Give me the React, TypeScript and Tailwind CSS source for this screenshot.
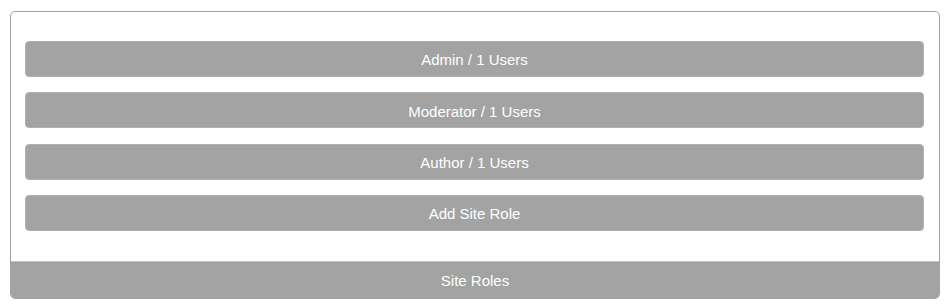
const roles = [
  { name: 'Admin', users: 1 },
  { name: 'Moderator', users: 1 },
  { name: 'Author', users: 1 },
]

export default function App() {
  return (
    <div className="bg-white min-h-[307px] pt-[11px] pl-[10px] pr-[10px] font-['Liberation_Sans',Arial,sans-serif]">
      <div className="w-[930px] border border-[#a3a3a3] rounded-[5px] overflow-hidden">
        <div className="flex flex-col gap-[15.3px] pt-[29px] pb-[30px] pl-[14px] pr-[15px]">
          {roles.map((role) => (
            <button
              key={role.name}
              className="h-[36px] w-full rounded-[4px] bg-[#a3a3a3] border border-[#b0b0b0] text-white text-[15px] text-center pt-[3px]"
            >
              {role.name} / {role.users} Users
            </button>
          ))}
          <button className="h-[36px] w-full rounded-[4px] bg-[#a3a3a3] border border-[#b0b0b0] text-white text-[15px] text-center pt-[3px]">
            Add Site Role
          </button>
        </div>
        <div className="h-[37px] bg-[#a3a3a3] border-t border-[#c4c4c4] flex items-center justify-center text-white text-[15px] pt-[3px]">
          Site Roles
        </div>
      </div>
    </div>
  )
}
